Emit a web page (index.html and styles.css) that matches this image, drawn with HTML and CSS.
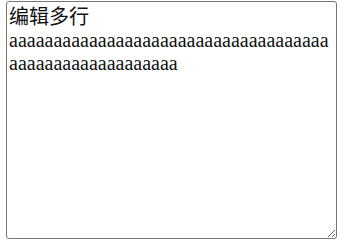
FILE: index.html
```html
<!DOCTYPE html>
<html lang="zh">
<head>
<meta charset="utf-8">
<title>编辑多行</title>
<link rel="stylesheet" href="styles.css">
</head>
<body>
<textarea class="editor">编辑多行
aaaaaaaaaaaaaaaaaaaaaaaaaaaaaaaaaaaaaaaaaaaaaaaaaaaaaaa</textarea>
</body>
</html>
```
FILE: styles.css
```css
html, body {
  margin: 0;
  padding: 0;
  background: #fff;
}

.editor {
  display: block;
  box-sizing: border-box;
  margin: 1px 0 0 6px;
  width: 331px;
  height: 238px;
  padding: 4px 2px 2px 2px;
  border: 1px solid #767676;
  border-radius: 3px;
  font-family: "Liberation Serif", "Noto Sans CJK SC", serif;
  font-size: 20px;
  line-height: 23px;
  color: #111;
  background: #fff;
}
```
